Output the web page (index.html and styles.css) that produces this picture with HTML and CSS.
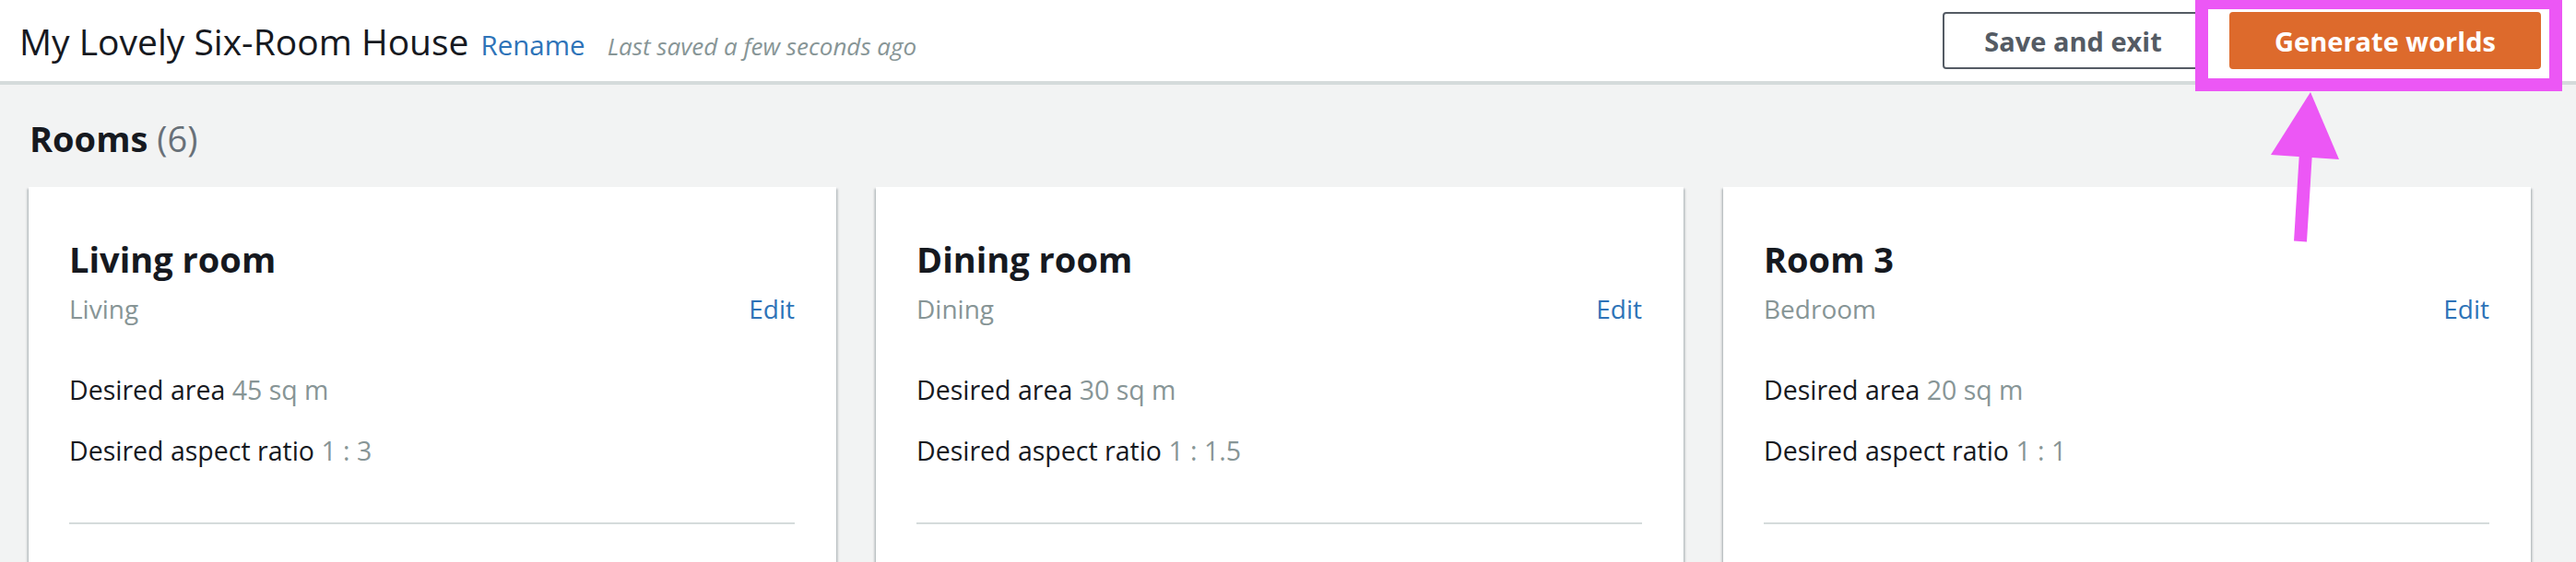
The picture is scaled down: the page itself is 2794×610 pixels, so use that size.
FILE: index.html
```html
<!DOCTYPE html>
<html lang="en">
<head>
<meta charset="utf-8">
<title>My Lovely Six-Room House</title>
<link rel="stylesheet" href="styles.css">
</head>
<body>
<header class="topbar">
  <div class="title-group">
    <h1 class="house-name">My Lovely Six-Room House</h1>
    <a class="rename" href="#">Rename</a>
    <span class="saved">Last saved a few seconds ago</span>
  </div>
  <div class="actions">
    <button class="btn btn-normal">Save and exit</button>
    <button class="btn btn-primary">Generate worlds</button>
  </div>
</header>
<main class="content">
  <h2 class="section-title">Rooms <span class="count">(6)</span></h2>
  <div class="cards">
    <section class="card">
      <h3 class="card-title">Living room</h3>
      <div class="card-sub"><span class="type">Living</span><a class="edit" href="#">Edit</a></div>
      <p class="prop prop-first">Desired area <span class="val">45 sq m</span></p>
      <p class="prop">Desired aspect ratio <span class="val">1 : 3</span></p>
      <hr class="divider">
    </section>
    <section class="card">
      <h3 class="card-title">Dining room</h3>
      <div class="card-sub"><span class="type">Dining</span><a class="edit" href="#">Edit</a></div>
      <p class="prop prop-first">Desired area <span class="val">30 sq m</span></p>
      <p class="prop">Desired aspect ratio <span class="val">1 : 1.5</span></p>
      <hr class="divider">
    </section>
    <section class="card">
      <h3 class="card-title">Room 3</h3>
      <div class="card-sub"><span class="type">Bedroom</span><a class="edit" href="#">Edit</a></div>
      <p class="prop prop-first">Desired area <span class="val">20 sq m</span></p>
      <p class="prop">Desired aspect ratio <span class="val">1 : 1</span></p>
      <hr class="divider">
    </section>
  </div>
</main>
<svg class="annotation" width="2794" height="610" viewBox="0 0 2794 610" aria-hidden="true">
  <rect x="2388" y="3" width="384" height="89" fill="none" stroke="#ec57f5" stroke-width="14"/>
  <polygon points="2506,100 2463,168 2537,173" fill="#ec57f5"/>
  <line x1="2501" y1="165" x2="2495" y2="262" stroke="#ec57f5" stroke-width="14"/>
</svg>
</body>
</html>
```
FILE: styles.css
```css
html, body {
  margin: 0;
  padding: 0;
}
body {
  background: #f2f3f3;
  font-family: "Open Sans", Roboto, "Liberation Sans", sans-serif;
  color: #16191f;
  width: 2794px;
  height: 610px;
  overflow: hidden;
  position: relative;
}
.topbar {
  height: 88px;
  background: #ffffff;
  border-bottom: 4px solid #d5dbdb;
  display: flex;
  align-items: center;
  justify-content: space-between;
  padding: 0 38px 0 21px;
}
.title-group {
  display: flex;
  align-items: baseline;
}
.house-name {
  margin: 0;
  font-size: 39px;
  font-weight: 400;
  color: #16191f;
}
.rename {
  margin-left: 13px;
  font-size: 29.5px;
  color: #2e73b8;
  text-decoration: none;
}
.saved {
  margin-left: 24px;
  font-size: 26px;
  font-style: italic;
  color: #879596;
}
.actions {
  display: flex;
  align-items: center;
  gap: 28px;
}
.btn {
  height: 62px;
  border-radius: 4px;
  font-family: "Open Sans", Roboto, "Liberation Sans", sans-serif;
  font-size: 29px;
  font-weight: 700;
  box-sizing: border-box;
  cursor: pointer;
  padding: 0;
}
.btn-normal {
  width: 283px;
  background: #ffffff;
  color: #545b64;
  border: 2px solid #545b64;
}
.btn-primary {
  width: 338px;
  background: #dd6a2c;
  color: #ffffff;
  border: 2px solid #dd6a2c;
}
.content {
  padding: 36px 49px 0 31px;
}
.section-title {
  margin: 0 0 31px 1px;
  font-size: 38px;
  line-height: 44px;
  font-weight: 700;
  color: #16191f;
}
.count {
  font-weight: 400;
  color: #687078;
}
.cards {
  display: grid;
  grid-template-columns: repeat(3, 876px);
  column-gap: 43px;
}
.card {
  background: #ffffff;
  min-height: 520px;
  padding: 56px 45px 0 44px;
  box-shadow: 0 2px 2px 0 rgba(0, 28, 36, 0.3), 2px 2px 2px 0 rgba(0, 28, 36, 0.15), -2px 2px 2px 0 rgba(0, 28, 36, 0.15);
}
.card-title {
  margin: 0;
  font-size: 38px;
  line-height: 44px;
  font-weight: 700;
  color: #16191f;
}
.card-sub {
  margin-top: 14px;
  display: flex;
  justify-content: space-between;
  align-items: baseline;
  font-size: 28px;
  line-height: 36px;
}
.type {
  color: #879596;
}
.edit {
  color: #2e73b8;
  text-decoration: none;
}
.prop {
  margin: 30px 0 0;
  font-size: 28.5px;
  line-height: 36px;
  color: #16191f;
}
.prop-first {
  margin-top: 52px;
}
.val {
  color: #879596;
}
.divider {
  margin: 60px 0 0;
  border: 0;
  height: 2px;
  background: #d5dbdb;
}
.annotation {
  position: absolute;
  left: 0;
  top: 0;
  pointer-events: none;
}
```
